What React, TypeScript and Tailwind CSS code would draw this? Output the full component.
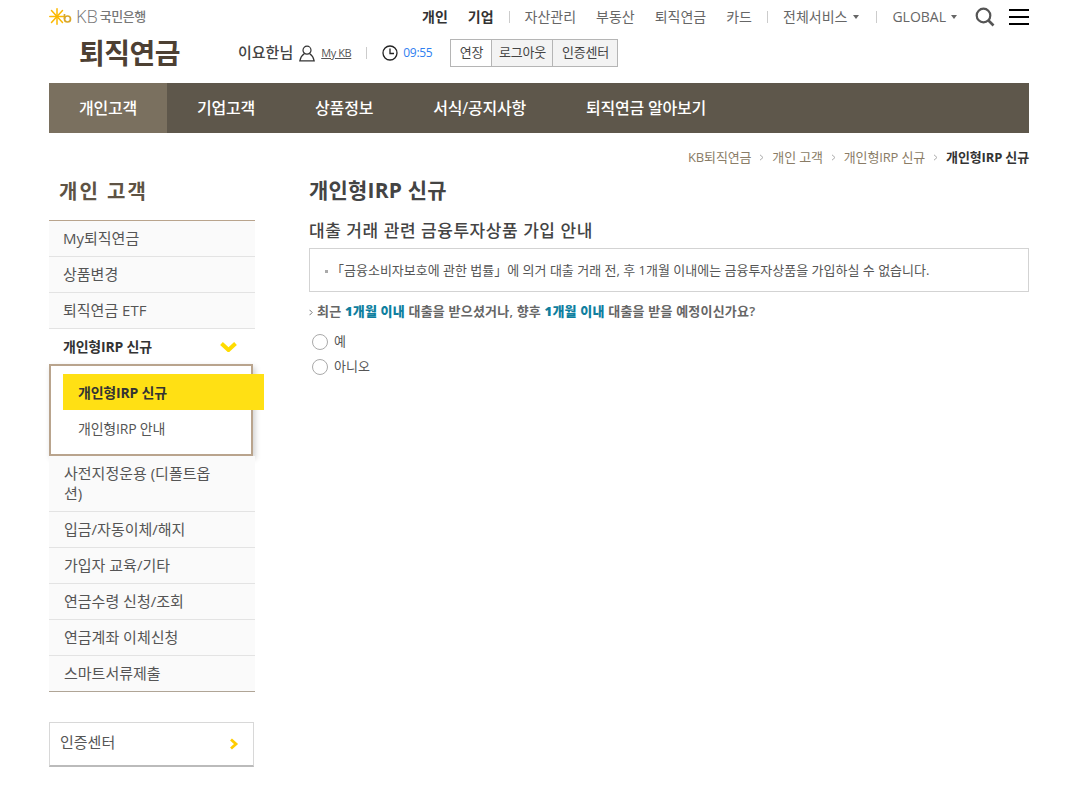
import React from 'react';

const font = { fontFamily: '"Open Sans", "Noto Sans CJK KR", sans-serif' };

const KbLogo = () => (
  <svg width="24" height="17" viewBox="0 0 24 17" fill="none">
    <g stroke="#fbb800" strokeWidth="1.500" strokeLinecap="round">
      <path d="M8 .8v15.400" />
      <path d="M.8 8.500h14" />
      <path d="M2.500 2.500l11 12" />
      <path d="M2.500 14.500l11-12" />
    </g>
    <circle cx="18.500" cy="11" r="3" stroke="#d9a72a" strokeWidth="1.700" />
    <path d="M15.500 6v5" stroke="#d9a72a" strokeWidth="1.700" />
  </svg>
);

const UserIcon = () => (
  <svg width="16" height="17" viewBox="0 0 16 17" fill="none" stroke="#333" strokeWidth="1.200">
    <circle cx="8" cy="5.200" r="4" />
    <path d="M5.500 8.600C3.500 10 1.500 12 .8 15.800h14.400C14.500 12 12.500 10 10.500 8.600" />
  </svg>
);

const ClockIcon = () => (
  <svg width="16" height="16" viewBox="0 0 16 16" fill="none" stroke="#222" strokeWidth="1.300">
    <circle cx="8" cy="8" r="7" />
    <path d="M8 3.500V8.500H12" />
  </svg>
);

const Caret = ({ className }: { className: string }) => (
  <span className={`inline-block h-0 w-0 border-x-[3.500px] border-t-[4px] border-x-transparent border-t-[#666] ${className}`} />
);

const Sep = ({ className }: { className: string }) => <span className={`h-[12px] w-px bg-[#ccc] ${className}`} />;

const Crumb = ({ label }: { label: string }) => (
  <>
    <span>{label}</span>
    <svg width="5" height="7" viewBox="0 0 5 7" fill="none" stroke="#aaa" className="mx-[8px]">
      <path d="M1 .8L4 3.500 1 6.200" />
    </svg>
  </>
);

const menuTop = ['My퇴직연금', '상품변경', '퇴직연금 ETF'];
const menuBottom = ['입금/자동이체/해지', '가입자 교육/기타', '연금수령 신청/조회', '연금계좌 이체신청', '스마트서류제출'];
const gnb = ['개인고객', '기업고객', '상품정보', '서식/공지사항', '퇴직연금 알아보기'];

const Radio = ({ label }: { label: string }) => (
  <label className="flex h-[25px] items-center">
    <span className="ml-[3px] h-[16px] w-[16px] rounded-full border border-[#aaa] bg-white" />
    <span className="ml-[6px] text-[13px] text-[#555]">{label}</span>
  </label>
);

export default function App() {
  return (
    <div style={font} className="ml-[49px] h-[805px] w-[980px] bg-white text-[#444]">
      <header className="relative h-[83px]">
        <div className="flex h-[33px] items-center justify-between">
          <div className="-mt-[1px] flex items-center text-[#777]">
            <KbLogo />
            <span className="ml-[3px] text-[18px] font-light leading-none">KB</span>
            <span className="ml-[2px] text-[13px] font-medium leading-none tracking-[-0.5px]">국민은행</span>
          </div>
          <div className="flex items-center text-[14px] text-[#666]">
            <span className="font-bold text-[#333]">개인</span>
            <span className="ml-[20px] font-bold text-[#333]">기업</span>
            <Sep className="mx-[15px]" />
            <span>자산관리</span>
            <span className="ml-[20px]">부동산</span>
            <span className="ml-[20px]">퇴직연금</span>
            <span className="ml-[20px]">카드</span>
            <Sep className="mx-[15px]" />
            <span>전체서비스</span>
            <Caret className="ml-[6px]" />
            <Sep className="ml-[17px] mr-[15px]" />
            <span>GLOBAL</span>
            <Caret className="ml-[5px]" />
            <svg width="20" height="20" viewBox="0 0 20 20" fill="none" stroke="#555" className="ml-[18px]">
              <circle cx="8.500" cy="8.500" r="6.800" strokeWidth="2.200" />
              <path d="M13.500 13.500L18.500 18.500" strokeWidth="2.600" />
            </svg>
            <span className="ml-[14px] flex h-[16px] w-[20px] flex-col justify-between">
              <span className="h-[2px] bg-black" />
              <span className="h-[2px] bg-black" />
              <span className="h-[2px] bg-black" />
            </span>
          </div>
        </div>
        <div className="flex h-[40px] items-center">
          <h1 className="-mt-[1px] ml-[30px] w-[159px] text-[28px] font-bold leading-none tracking-[-0.5px] text-[#4d4033]">퇴직연금</h1>
          <span className="-mt-[1px] text-[15px] font-medium text-[#444]">이요한님</span>
          <span className="ml-[6px]"><UserIcon /></span>
          <span className="ml-[6px] text-[11px] tracking-[-0.4px] text-[#555] underline">My KB</span>
          <Sep className="mx-[15px]" />
          <ClockIcon />
          <span className="ml-[5px] text-[12px] tracking-[-0.3px] text-[#2f80f0]">09:55</span>
          <div className="ml-[18px] flex h-[28px] border border-[#b5b5b5] text-[13px] tracking-[-0.2px] text-[#444]">
            <span className="flex w-[40px] items-center justify-center bg-white">연장</span>
            <span className="flex w-[61px] items-center justify-center border-l border-[#b5b5b5] bg-[#f3f3f3]">로그아웃</span>
            <span className="flex w-[65px] items-center justify-center border-l border-[#b5b5b5] bg-[#f3f3f3]">인증센터</span>
          </div>
        </div>
      </header>

      <nav className="flex h-[50px] items-center bg-[#5e574b] text-[16px] font-medium tracking-[-0.2px] text-white">
        {gnb.map((item, i) => (
          <span key={item} className={i === 0 ? 'flex h-full w-[118px] items-center justify-center bg-[#7a705f]' : 'flex h-full items-center px-[30px]'}>
            {item}
          </span>
        ))}
      </nav>

      <div className="flex h-[49px] items-center justify-end text-[13px] tracking-[-0.15px] text-[#8a7c66]">
        <Crumb label="KB퇴직연금" />
        <Crumb label="개인 고객" />
        <Crumb label="개인형IRP 신규" />
        <span className="font-bold text-[#333]">개인형IRP 신규</span>
      </div>

      <div className="flex">
        <aside className="w-[206px]">
          <h2 className="flex h-[38px] items-start pl-[10px] text-[20px] font-bold leading-[20px] tracking-[2px] text-[#5e5344]">개인 고객</h2>
          <ul className="border-t border-[#b9a48d] text-[15px] text-[#555]">
            {menuTop.map(item => (
              <li key={item} className="flex h-[36px] items-center border-b border-[#e3e3e3] bg-[#fafafa] pl-[14px]">{item}</li>
            ))}
            <li className="flex h-[35px] items-center justify-between bg-white pl-[14px] pr-[18px] text-[14px] font-bold tracking-[-0.2px] text-[#333]">
              개인형IRP 신규
              <svg width="17" height="10" viewBox="0 0 17 10" fill="none" stroke="#ffdc00" strokeWidth="4">
                <path d="M1.500 1.500L8.500 8 15.500 1.500" />
              </svg>
            </li>
            <li className="h-[92px] w-[204px] border-[2px] border-[#b9a48d] bg-white pt-[8px] text-[14px] tracking-[-0.2px] shadow-[2px_3px_6px_rgba(0,0,0,0.2)]">
              <div className="ml-[12px] flex h-[36px] w-[201px] items-center bg-[#ffe014] pl-[15px] font-bold text-[#333]">개인형IRP 신규</div>
              <div className="ml-[12px] flex h-[36px] items-center pl-[15px] text-[#555]">개인형IRP 안내</div>
            </li>
            <li className="flex h-[56px] items-center break-all border-b border-[#e3e3e3] bg-[#fafafa] pb-[2px] pl-[15px] pr-[32px] leading-[20px]">사전지정운용 (디폴트옵션)</li>
            {menuBottom.map((item, i) => (
              <li key={item} className={`flex h-[36px] items-center border-b bg-[#fafafa] pl-[15px] ${i === menuBottom.length - 1 ? 'border-[#b0a596]' : 'border-[#e3e3e3]'}`}>
                {item}
              </li>
            ))}
          </ul>
          <div className="mt-[30px] flex h-[45px] w-[205px] items-center justify-between border border-b-2 border-[#d8d8d8] border-b-[#bbb] pl-[10px] pr-[14px] text-[15px] text-[#555]">
            <span className="-mt-[3px]">인증센터</span>
            <svg width="10" height="12" viewBox="0 0 10 12" fill="none" stroke="#ffcc00" strokeWidth="2.800">
              <path d="M2 1.500L7 6 2 10.500" />
            </svg>
          </div>
        </aside>

        <main className="ml-[54px] w-[720px]">
          <h2 className="h-[40px] text-[21px] font-bold leading-[16px] tracking-[0.2px] text-[#444]">개인형IRP 신규</h2>
          <h3 className="h-[26px] text-[17px] font-medium leading-[18px] tracking-[0.550px] text-[#444]">대출 거래 관련 금융투자상품 가입 안내</h3>
          <div className="flex h-[44px] items-center border border-[#d3d3d3] pl-[15px] pt-[2px] text-[13px] text-[#555]">
            <span className="mr-[3px] h-[3px] w-[3px] bg-[#aaa]" />
            「금융소비자보호에 관한 법률」에 의거 대출 거래 전, 후 1개월 이내에는 금융투자상품을 가입하실 수 없습니다.
          </div>
          <p className="mt-[11px] flex h-[18px] items-center text-[13px] font-semibold tracking-[0.2px] text-[#666]">
            <svg width="4" height="7" viewBox="0 0 4 7" fill="none" stroke="#777" className="mr-[4px]">
              <path d="M.5 .8L3.200 3.500 .5 6.200" />
            </svg>
            최근&nbsp;<b className="text-[#0f7f9f]">1개월 이내</b>&nbsp;대출을 받으셨거나, 향후&nbsp;<b className="text-[#0f7f9f]">1개월 이내</b>&nbsp;대출을 받을 예정이신가요?
          </p>
          <div className="mt-[8px]">
            <Radio label="예" />
            <Radio label="아니오" />
          </div>
        </main>
      </div>
    </div>
  );
}
